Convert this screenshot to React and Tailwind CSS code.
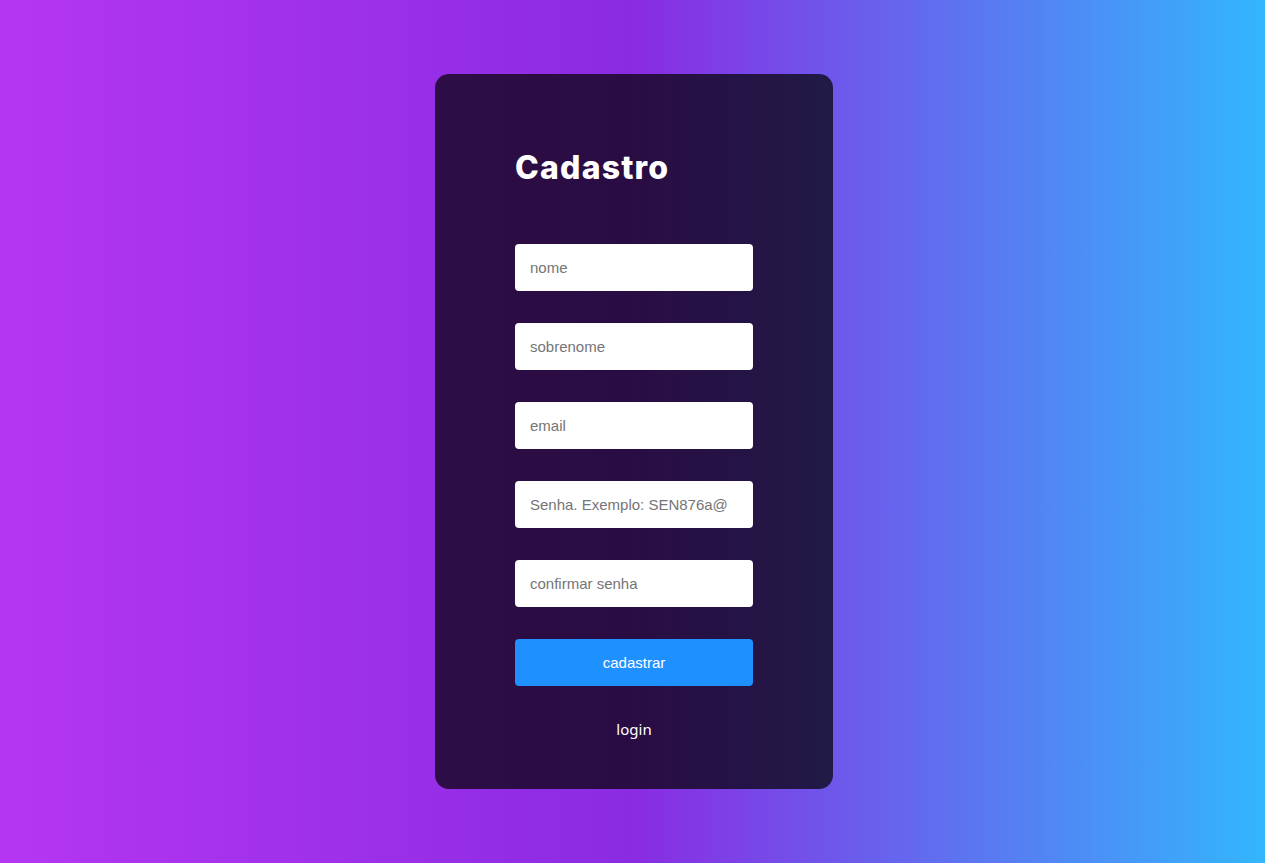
export default function App() {
  const fields = [
    { ph: "nome", type: "text" },
    { ph: "sobrenome", type: "text" },
    { ph: "email", type: "email" },
    { ph: "Senha. Exemplo: SEN876a@", type: "password" },
    { ph: "confirmar senha", type: "password" },
  ];

  return (
    <div className="min-h-screen w-full flex justify-center pl-[3px] pt-[74px] bg-[linear-gradient(to_right,#b536f2,#8a2be2_50%,#33b6fd)] font-['Liberation_Sans',Arial,sans-serif]">
      <div className="w-[398px] h-[715px] rounded-[14px] bg-black/70 px-20 pt-[72px]">
        <h1 className="text-[32px] leading-[44px] font-extrabold text-white tracking-[1.2px] font-['Inter','Noto_Sans',sans-serif]">
          Cadastro
        </h1>

        <form className="mt-[54px] flex flex-col gap-8" onSubmit={(e) => e.preventDefault()}>
          {fields.map((f) => (
            <input
              key={f.ph}
              type={f.type}
              placeholder={f.ph}
              className="h-[47px] w-full rounded-[4px] bg-white px-[15px] text-[15px] text-gray-800 placeholder:text-[#757575] outline-none"
            />
          ))}
          <button className="h-[47px] w-full rounded-[4px] bg-[#1e90ff] pt-px text-[15px] text-white">
            cadastrar
          </button>
        </form>

        <p className="mt-[32px] text-center text-[15px] text-white font-['Noto_Sans',sans-serif]">
          login
        </p>
      </div>
    </div>
  );
}
